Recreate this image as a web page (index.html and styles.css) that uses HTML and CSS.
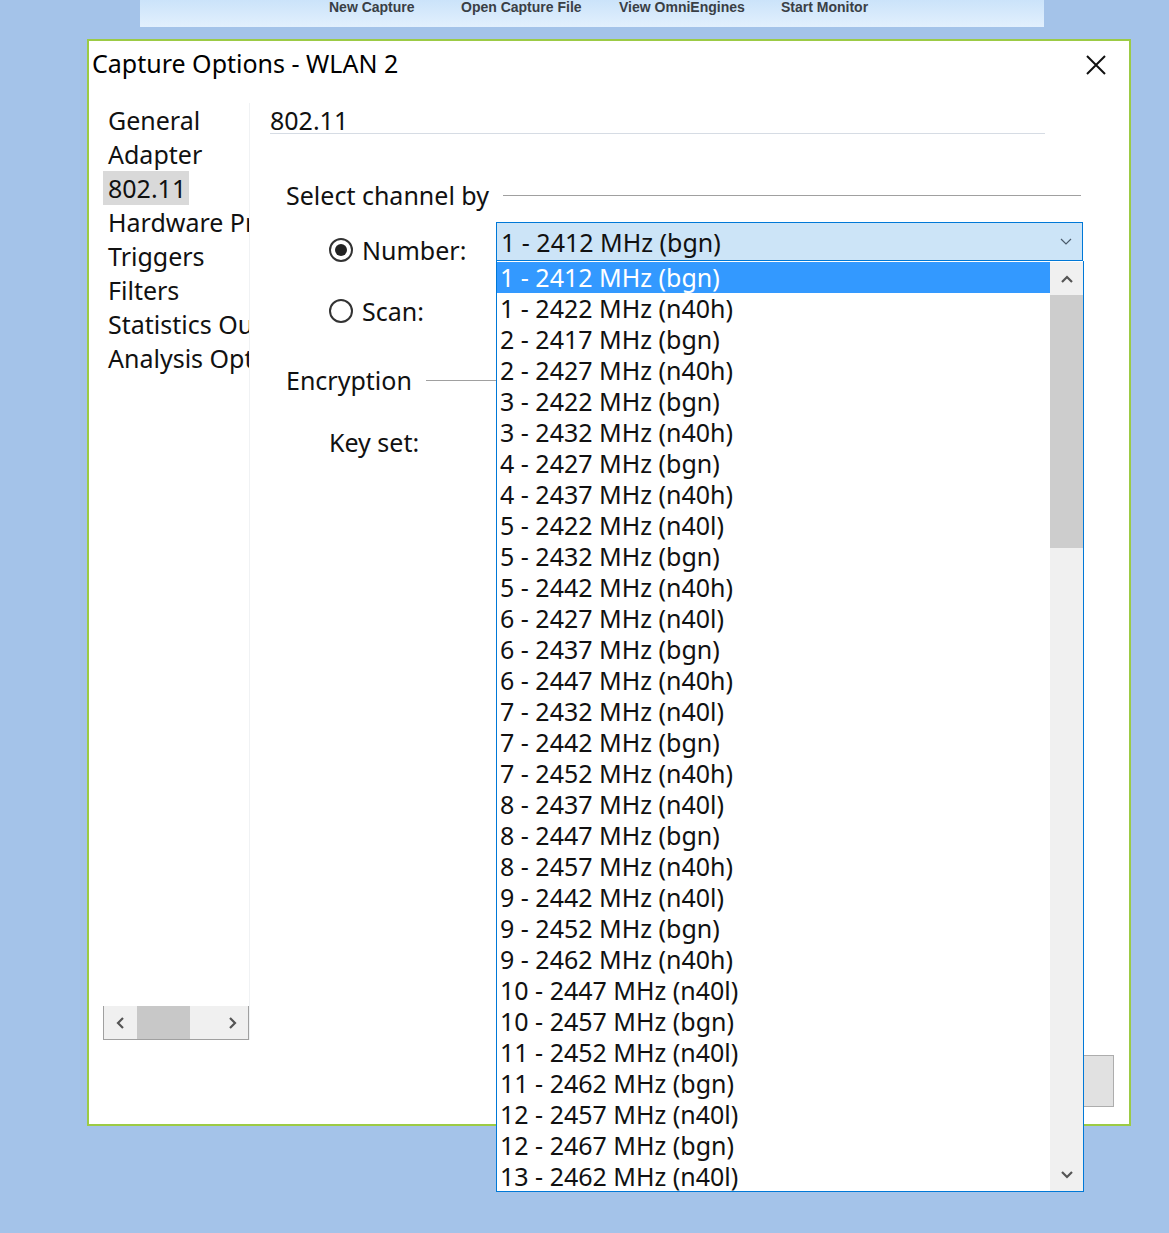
FILE: index.html
```html
<!DOCTYPE html>
<html>
<head>
<meta charset="utf-8">
<link rel="stylesheet" href="styles.css">
</head>
<body>
<div class="toolbar">
  <span class="tb-item tb-new">New Capture</span>
  <span class="tb-item tb-open">Open Capture File</span>
  <span class="tb-item tb-view">View OmniEngines</span>
  <span class="tb-item">Start Monitor</span>
</div>
<div class="dialog">
  <div class="titlebar">
    <span class="title">Capture Options - WLAN 2</span>
    <svg class="close" width="22" height="22" viewBox="0 0 22 22"><path d="M2 2 L20 20 M20 2 L2 20" stroke="#111" stroke-width="2" fill="none"/></svg>
  </div>
  <div class="main">
    <div class="nav">
      <ul class="nav-list">
        <li>General</li>
        <li>Adapter</li>
        <li class="sel">802.11</li>
        <li>Hardware Profiles</li>
        <li>Triggers</li>
        <li>Filters</li>
        <li>Statistics Output</li>
        <li>Analysis Options</li>
      </ul>
      <div class="hscroll">
        <span class="hs-arrow"><svg width="10" height="12" viewBox="0 0 10 12"><path d="M7 1 L2 6 L7 11" stroke="#555" stroke-width="2.2" fill="none"/></svg></span>
        <span class="hs-thumb"></span>
        <span class="hs-track"></span>
        <span class="hs-arrow"><svg width="10" height="12" viewBox="0 0 10 12"><path d="M3 1 L8 6 L3 11" stroke="#555" stroke-width="2.2" fill="none"/></svg></span>
      </div>
    </div>
    <div class="content">
      <div class="page-head">802.11</div>
      <div class="group-title"><span>Select channel by</span><span class="rule"></span></div>
      <div class="opt-row">
        <label class="radio-label"><span class="radio on"></span>Number:</label>
        <div class="combo"><span>1 - 2412 MHz (bgn)</span><svg width="12" height="8" viewBox="0 0 12 8"><path d="M1 1 L6 6 L11 1" stroke="#4a5a6a" stroke-width="1.2" fill="none"/></svg></div>
      </div>
      <div class="opt-row scan-row">
        <label class="radio-label"><span class="radio"></span>Scan:</label>
      </div>
      <div class="group-title enc"><span>Encryption</span><span class="rule"></span></div>
      <div class="opt-row key-row">
        <label class="plain-label">Key set:</label>
      </div>
    </div>
  </div>
  <div class="footer">
    <button class="btn">OK</button>
    <button class="btn">Cancel</button>
  </div>
  <div class="droplist">
    <ul class="items">
      <li class="hl">1 - 2412 MHz (bgn)</li>
      <li>1 - 2422 MHz (n40h)</li>
      <li>2 - 2417 MHz (bgn)</li>
      <li>2 - 2427 MHz (n40h)</li>
      <li>3 - 2422 MHz (bgn)</li>
      <li>3 - 2432 MHz (n40h)</li>
      <li>4 - 2427 MHz (bgn)</li>
      <li>4 - 2437 MHz (n40h)</li>
      <li>5 - 2422 MHz (n40l)</li>
      <li>5 - 2432 MHz (bgn)</li>
      <li>5 - 2442 MHz (n40h)</li>
      <li>6 - 2427 MHz (n40l)</li>
      <li>6 - 2437 MHz (bgn)</li>
      <li>6 - 2447 MHz (n40h)</li>
      <li>7 - 2432 MHz (n40l)</li>
      <li>7 - 2442 MHz (bgn)</li>
      <li>7 - 2452 MHz (n40h)</li>
      <li>8 - 2437 MHz (n40l)</li>
      <li>8 - 2447 MHz (bgn)</li>
      <li>8 - 2457 MHz (n40h)</li>
      <li>9 - 2442 MHz (n40l)</li>
      <li>9 - 2452 MHz (bgn)</li>
      <li>9 - 2462 MHz (n40h)</li>
      <li>10 - 2447 MHz (n40l)</li>
      <li>10 - 2457 MHz (bgn)</li>
      <li>11 - 2452 MHz (n40l)</li>
      <li>11 - 2462 MHz (bgn)</li>
      <li>12 - 2457 MHz (n40l)</li>
      <li>12 - 2467 MHz (bgn)</li>
      <li>13 - 2462 MHz (n40l)</li>
    </ul>
    <div class="vscroll">
      <span class="vs-arrow"><svg width="12" height="8" viewBox="0 0 12 8"><path d="M1 7 L6 2 L11 7" stroke="#555" stroke-width="2.2" fill="none"/></svg></span>
      <span class="vs-thumb"></span>
      <span class="vs-track"></span>
      <span class="vs-arrow"><svg width="12" height="8" viewBox="0 0 12 8"><path d="M1 1 L6 6 L11 1" stroke="#555" stroke-width="2.2" fill="none"/></svg></span>
    </div>
  </div>
</div>
</body>
</html>
```
FILE: styles.css
```css
* { box-sizing: border-box; }
html, body { margin: 0; padding: 0; }
body {
  background: #a4c3e9;
  font-family: "Noto Sans", "Open Sans", sans-serif;
  color: #111;
  width: 1169px;
  height: 1233px;
  overflow: hidden;
}
.toolbar {
  margin-left: 140px;
  width: 904px;
  height: 27px;
  background: linear-gradient(#cbe3fa, #e2f0fd);
  display: flex;
  padding-left: 189px;
  font-family: "Liberation Sans", Arial, sans-serif;
  font-weight: bold;
  font-size: 14px;
  line-height: 15px;
  color: #3a3f46;
}
.tb-item { display: block; white-space: nowrap; flex-shrink: 0; }
.tb-new { width: 132px; }
.tb-open { width: 158px; }
.tb-view { width: 162px; }

.dialog {
  position: relative;
  margin-top: 12px;
  margin-left: 87px;
  width: 1044px;
  height: 1087px;
  background: #fff;
  border: 2px solid #9ccb45;
  display: flex;
  flex-direction: column;
}
.titlebar {
  height: 62px;
  padding: 6px 0 0 3px;
  display: flex;
  align-items: flex-start;
  justify-content: space-between;
}
.title { font-size: 25px; line-height: 32px; color: #000; }
.close { margin: 7px 22px 0 0; }

.main {
  flex: 1;
  display: flex;
  padding-left: 14px;
  min-height: 0;
}
.nav {
  width: 147px;
  flex-shrink: 0;
  display: flex;
  flex-direction: column;
  justify-content: space-between;
  border-right: 1px solid #f0f2f4;
}
.nav-list {
  list-style: none;
  margin: 0;
  padding: 0;
  font-size: 25px;
  line-height: 34px;
  overflow: hidden;
  white-space: nowrap;
}
.nav-list li { padding-left: 5px; width: max-content; }
.nav-list li.sel { background: #d9d9d9; padding-right: 3px; }
.hscroll {
  height: 34px;
  width: 146px;
  display: flex;
  align-items: center;
  background: #f0f0f0;
  border: 1px solid #a0a0a0;
  border-top: none;
}
.hs-arrow { width: 33px; height: 100%; display: flex; align-items: center; justify-content: center; }
.hs-thumb { width: 53px; height: 100%; background: #c8c8c8; }
.hs-track { flex: 1; }

.content {
  margin-left: 20px;
  width: 830px;
  flex-shrink: 0;
}
.page-head {
  width: 775px;
  margin-top: 4px;
  font-size: 25px;
  line-height: 26px;
  border-bottom: 1px solid #d6dce4;
}
.group-title {
  margin-left: 16px;
  width: 795px;
  margin-top: 46px;
  display: flex;
  align-items: center;
  font-size: 25px;
  line-height: 30px;
}
.group-title .rule { flex: 1; height: 1px; background: #a0a0a0; margin-left: 14px; }
.group-title.enc { margin-top: 39px; }
.opt-row {
  margin-left: 59px;
  margin-top: 12px;
  display: flex;
  align-items: flex-start;
  font-size: 25px;
  line-height: 30px;
}
.radio-label, .plain-label {
  width: 167px;
  flex-shrink: 0;
  display: flex;
  align-items: center;
  margin-top: 13px;
}
.radio {
  width: 24px;
  height: 24px;
  border: 2px solid #333;
  border-radius: 50%;
  margin-right: 9px;
  display: flex;
  align-items: center;
  justify-content: center;
}
.radio.on::after {
  content: "";
  width: 12px;
  height: 12px;
  border-radius: 50%;
  background: #222;
}
.combo {
  width: 587px;
  flex-shrink: 0;
  height: 39px;
  background: #cce4f7;
  border: 1px solid #0078d7;
  display: flex;
  align-items: center;
  justify-content: space-between;
  padding: 0 10px 0 4px;
  font-size: 25px;
}
.scan-row { margin-top: 18px; }
.key-row { margin-top: 19px; }

.footer {
  height: 84px;
  display: flex;
  justify-content: flex-end;
  gap: 10px;
  padding: 15px 15px 17px 0;
}
.btn {
  width: 140px;
  height: 52px;
  background: #e1e1e1;
  border: 1px solid #adadad;
  font-family: "Noto Sans", sans-serif;
  font-size: 20px;
}

.droplist {
  position: absolute;
  left: 407px;
  top: 220px;
  width: 588px;
  height: 931px;
  background: #fff;
  border: 1px solid #0078d7;
  border-top: none;
  display: flex;
  padding-top: 1px;
}
.items {
  list-style: none;
  margin: 0;
  padding: 0;
  flex: 1;
  font-size: 25px;
  line-height: 31px;
  overflow: hidden;
}
.items li { padding-left: 3px; white-space: nowrap; }
.items li.hl { background: #3399ff; color: #fff; }
.vscroll {
  width: 33px;
  background: #f0f0f0;
  display: flex;
  flex-direction: column;
}
.vs-arrow { height: 33px; display: flex; align-items: center; justify-content: center; }
.vs-thumb { height: 253px; background: #cdcdcd; }
.vs-track { flex: 1; }
```
